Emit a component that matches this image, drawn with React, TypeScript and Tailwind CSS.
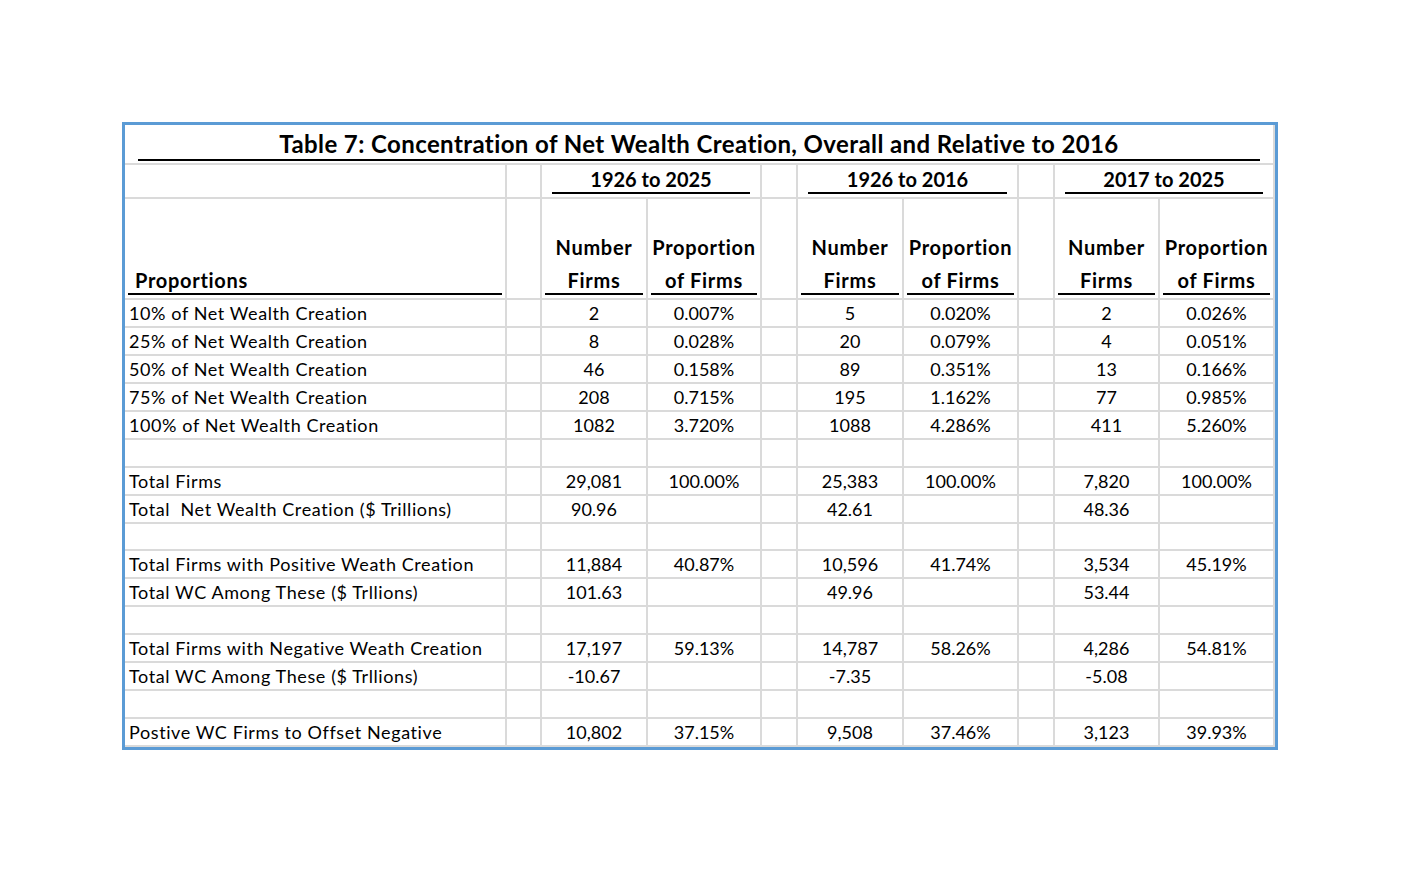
import React from "react";

const cell = "border-r-2 border-b-2 border-[#dadada]";

type Row = { label: string; v: string[] };

const rows: Row[] = [
  { label: "10% of Net Wealth Creation", v: ["2", "0.007%", "5", "0.020%", "2", "0.026%"] },
  { label: "25% of Net Wealth Creation", v: ["8", "0.028%", "20", "0.079%", "4", "0.051%"] },
  { label: "50% of Net Wealth Creation", v: ["46", "0.158%", "89", "0.351%", "13", "0.166%"] },
  { label: "75% of Net Wealth Creation", v: ["208", "0.715%", "195", "1.162%", "77", "0.985%"] },
  { label: "100% of Net Wealth Creation", v: ["1082", "3.720%", "1088", "4.286%", "411", "5.260%"] },
  { label: "", v: ["", "", "", "", "", ""] },
  { label: "Total Firms", v: ["29,081", "100.00%", "25,383", "100.00%", "7,820", "100.00%"] },
  { label: "Total  Net Wealth Creation ($ Trillions)", v: ["90.96", "", "42.61", "", "48.36", ""] },
  { label: "", v: ["", "", "", "", "", ""] },
  { label: "Total Firms with Positive Weath Creation", v: ["11,884", "40.87%", "10,596", "41.74%", "3,534", "45.19%"] },
  { label: "Total WC Among These ($ Trllions)", v: ["101.63", "", "49.96", "", "53.44", ""] },
  { label: "", v: ["", "", "", "", "", ""] },
  { label: "Total Firms with Negative Weath Creation", v: ["17,197", "59.13%", "14,787", "58.26%", "4,286", "54.81%"] },
  { label: "Total WC Among These ($ Trllions)", v: ["-10.67", "", "-7.35", "", "-5.08", ""] },
  { label: "", v: ["", "", "", "", "", ""] },
  { label: "Postive WC Firms to Offset Negative", v: ["10,802", "37.15%", "9,508", "37.46%", "3,123", "39.93%"] },
];

function Gap() {
  return <div className={`${cell} h-full`} />;
}

function GroupHead({ text }: { text: string }) {
  return (
    <div className={`${cell} col-span-2 h-[34px] flex flex-col justify-end px-[10px] pb-[3px]`}>
      <div className="border-b-2 border-black text-center font-bold text-[20px] leading-[26px]">{text}</div>
    </div>
  );
}

function SubHead({ a, b }: { a: string; b: string }) {
  return (
    <div className={`${cell} h-[101px] flex flex-col justify-end px-[3px] pb-[3px]`}>
      <div className="border-b-2 border-black text-center font-bold text-[20px] tracking-[0.7px]">
        <div className="leading-[40px]">{a}</div>
        <div className="leading-[26px]">{b}</div>
      </div>
    </div>
  );
}

const num = `${cell} h-[27.94px] text-[18px] leading-[26px] flex items-center justify-center`;

export default function App() {
  return (
    <div className="min-h-[873px] bg-white pt-[122px] pl-[122px] text-black" style={{ fontFamily: "Lato, 'Open Sans', sans-serif" }}>
      <div className="w-[1156px] border-[3px] border-[#5b9bd5]">
        <div className="grid grid-cols-[382px_35px_106px_114px_36px_106px_115px_36px_105px_115px]">
          {/* Title */}
          <div className={`${cell} col-span-10 h-[40px] flex flex-col justify-end px-[13px] pb-[2px]`}>
            <div className="border-b-2 border-black text-center font-bold text-[24px] leading-[30px] tracking-[0.4px]">
              Table 7: Concentration of Net Wealth Creation, Overall and Relative to 2016
            </div>
          </div>
          {/* Header 1 */}
          <div className={`${cell} h-[34px]`} />
          <Gap />
          <GroupHead text="1926 to 2025" />
          <Gap />
          <GroupHead text="1926 to 2016" />
          <Gap />
          <GroupHead text="2017 to 2025" />
          {/* Header 2 */}
          <div className={`${cell} h-[101px] flex flex-col justify-end px-[3px] pb-[3px]`}>
            <div className="border-b-2 border-black font-bold text-[20px] leading-[26px] tracking-[0.7px] pl-[7px]">Proportions</div>
          </div>
          <Gap />
          <SubHead a="Number" b="Firms" />
          <SubHead a="Proportion" b="of Firms" />
          <Gap />
          <SubHead a="Number" b="Firms" />
          <SubHead a="Proportion" b="of Firms" />
          <Gap />
          <SubHead a="Number" b="Firms" />
          <SubHead a="Proportion" b="of Firms" />
          {/* Data */}
          {rows.map((r, i) => (
            <React.Fragment key={i}>
              <div className={`${cell} h-[27.94px] pl-[4px] text-[18px] leading-[26px] tracking-[0.6px] whitespace-pre flex items-center`}>{r.label}</div>
              <Gap />
              <div className={num}>{r.v[0]}</div>
              <div className={num}>{r.v[1]}</div>
              <Gap />
              <div className={num}>{r.v[2]}</div>
              <div className={num}>{r.v[3]}</div>
              <Gap />
              <div className={num}>{r.v[4]}</div>
              <div className={num}>{r.v[5]}</div>
            </React.Fragment>
          ))}
        </div>
      </div>
    </div>
  );
}
